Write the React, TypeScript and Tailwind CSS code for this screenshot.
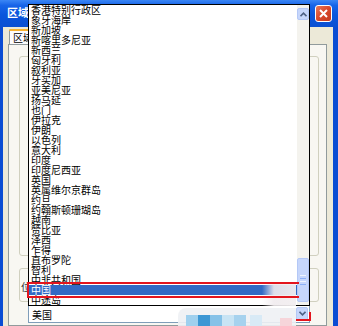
import React from "react";

const items = [
  "香港特别行政区",
  "象牙海岸",
  "新加坡",
  "新喀里多尼亚",
  "新西兰",
  "匈牙利",
  "叙利亚",
  "牙买加",
  "亚美尼亚",
  "扬马延",
  "也门",
  "伊拉克",
  "伊朗",
  "以色列",
  "意大利",
  "印度",
  "印度尼西亚",
  "英国",
  "英属维尔京群岛",
  "约旦",
  "约翰斯顿珊瑚岛",
  "越南",
  "赞比亚",
  "泽西",
  "乍得",
  "直布罗陀",
  "智利",
  "中非共和国",
  "中国",
  "中途岛",
];

export default function App() {
  return (
    <div className="relative w-[338px] h-[326px] overflow-hidden bg-[#0A4CD3] font-['Noto_Sans_CJK_SC',sans-serif] flex flex-col">
      {/* title bar */}
      <div className="h-[27px] shrink-0 flex items-start bg-[linear-gradient(to_bottom,#3B86F5_0%,#1764E8_20%,#0A56DC_55%,#0A4FD2_100%)]">
        <span className="ml-[7px] mt-[6px] text-white font-bold text-[11px] leading-[13px]">区域</span>
        <div className="ml-auto mr-[6px] mt-[5px] w-[17px] h-[17px] rounded-[3px] border border-white bg-[linear-gradient(135deg,#E8795B_0%,#D9482A_50%,#C23A1F_100%)] flex items-center justify-center">
          <svg width="9" height="9" viewBox="0 0 9 9">
            <path d="M1 1L8 8M8 1L1 8" stroke="white" strokeWidth="2" />
          </svg>
        </div>
      </div>

      {/* dialog body */}
      <div className="flex-1 ml-[3px] mr-[5px] bg-[#ECE9D8] flex flex-col">
        <div className="pt-[2px] pl-[6px] flex">
          <div className="relative w-[44px] h-[15px] border border-b-0 border-[#919B9C] bg-[#FCFCFE] rounded-t-[2px]">
            <div className="absolute -top-px -left-px -right-px h-[2px] bg-[#F7B22F] rounded-t-[2px]" />
            <span className="block pl-[3px] pt-[2px] text-[10px] leading-[11px] text-black">区域</span>
          </div>
        </div>
        <div className="flex-1 ml-[5px] mr-[6px] border border-[#919B9C] bg-[#F8F7F2] pl-[10px] pr-[7px] pt-[11px] flex flex-col">
          <div className="h-[200px] shrink-0 rounded-[3px] border border-[#D0D0BF]" />
          <div className="mt-[12px] h-[34px] shrink-0 rounded-[3px] border border-[#D0D0BF] pl-[1px] pt-[13px]">
            <span className="block text-[10px] leading-[10px] text-[#333]">位置</span>
          </div>
          {/* combobox */}
          <div className="mt-[2px] ml-[9px] w-[282px] h-[19px] shrink-0 border border-[#7F9DB9] bg-white flex items-center">
            <span className="pl-[3px] pt-[3px] text-[10px] leading-[10px] text-black">美国</span>
            <div className="ml-auto mr-[1px] w-[12px] h-[14px] rounded-[2px] border border-[#B4C8F6] bg-[#C6D6FB] flex items-center justify-center">
              <svg width="7" height="5" viewBox="0 0 7 5">
                <path d="M0.5 0.8L3.5 3.8L6.5 0.8" stroke="#4D6185" strokeWidth="1.6" fill="none" />
              </svg>
            </div>
          </div>
        </div>
      </div>

      {/* dropdown list overlay */}
      <div className="absolute left-[28px] top-[4px] w-[282px] h-[302px] border border-black bg-white flex">
        <div className="flex-1 flex flex-col">
          {items.map((t) => (
            <div
              key={t}
              className={
                t === "中国"
                  ? "h-[10px] pl-[2px] text-[10px] leading-[10px] whitespace-nowrap bg-[#316AC5] text-white"
                  : "h-[10px] pl-[2px] text-[10px] leading-[10px] whitespace-nowrap text-black"
              }
            >
              {t}
            </div>
          ))}
        </div>
        <div className="w-[12px] bg-[#F4F3EE] flex flex-col">
          <div className="mt-[3px] h-[12px] rounded-[2px] border border-[#B4C8F6] bg-[#C6D6FB] flex items-center justify-center">
            <svg width="7" height="5" viewBox="0 0 7 5">
              <path d="M0.5 4.2L3.5 1.2L6.5 4.2" stroke="#4D6185" strokeWidth="1.6" fill="none" />
            </svg>
          </div>
          <div className="flex-1" />
          <div className="mb-[3px] h-[44px] rounded-[2px] border border-[#B4C8F6] bg-[#C6D6FB] flex flex-col items-center justify-center gap-[2px]">
            <div className="w-[6px] h-px bg-[#EEF4FE]" />
            <div className="w-[6px] h-px bg-[#8CB0F8]" />
            <div className="w-[6px] h-px bg-[#EEF4FE]" />
            <div className="w-[6px] h-px bg-[#8CB0F8]" />
          </div>
        </div>
      </div>

      {/* washed-out region right of highlight */}
      <div className="absolute left-[262px] top-[284px] w-[34px] h-[22px] bg-[linear-gradient(to_right,rgba(240,235,238,0)_0%,rgba(240,235,238,0.9)_35%,rgba(242,238,240,0.95)_100%)]" />

      {/* red annotation rectangles */}
      <div className="absolute left-[27px] top-[282px] w-[272px] h-[16px] border-2 border-r-0 border-[#E3151E]" />
      <div className="absolute left-[296px] top-[312px] w-[15px] h-[9px] border-b-2 border-r-2 border-[#E3151E]" />

      {/* watermark */}
      <div className="absolute left-[178px] top-[308px] w-[118px] h-[18px] rounded-tl-[8px] bg-[#EEF1F4]/90 flex items-end pl-[8px]">
        <div className="w-[12px] h-[11px] bg-[#9FD0EE]" />
        <div className="w-[12px] h-[11px] bg-[#3C97D4]" />
        <div className="w-[12px] h-[11px] bg-[#86C2E8]" />
        <div className="w-[12px] h-[11px] bg-[#C8E4F4]" />
        <div className="w-[12px] h-[11px] bg-[#A6D2EE]" />
        <div className="w-[4px] h-[11px]" />
        <div className="w-[12px] h-[11px] bg-[#D8EAF6]" />
        <div className="w-[18px] h-[11px]" />
        <div className="w-[12px] h-[8px] bg-[#F6D5DA]" />
      </div>
    </div>
  );
}
